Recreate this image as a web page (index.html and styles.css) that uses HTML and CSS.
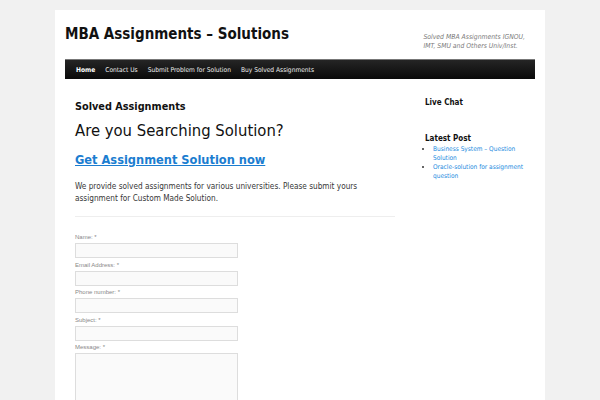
FILE: index.html
```html
<!DOCTYPE html>
<html lang="en">

<head>
	<meta charset="utf-8">
	<title>MBA Assignments – Solutions</title>
	<link rel="stylesheet" href="styles.css">
</head>

<body>
	<div id="page">
		<!-- Header -->
		<header class="site-header">
			<div class="branding">
				<h1 class="site-title">MBA Assignments – Solutions</h1>
				<p class="site-description">Solved MBA Assignments IGNOU,<br>IMT, SMU and Others Univ/Inst.</p>
			</div>
			<nav class="access">
				<a href="#" class="current">Home</a>
				<a href="#">Contact Us</a>
				<a href="#">Submit Problem for Solution</a>
				<a href="#">Buy Solved Assignments</a>
			</nav>
		</header>

		<!-- Main -->
		<div class="main">
			<div class="content">
				<h2 class="entry-title">Solved Assignments</h2>
				<h3 class="big">Are you Searching Solution?</h3>
				<h3 class="cta"><a href="#">Get Assignment Solution now</a></h3>
				<p class="intro">We provide solved assignments for various universities. Please submit yours assignment for Custom Made Solution.</p>
				<hr>

				<form class="contact-form">
					<div class="field">
						<label for="name">Name: *</label>
						<input type="text" id="name">
					</div>
					<div class="field">
						<label for="email">Email Address: *</label>
						<input type="text" id="email">
					</div>
					<div class="field">
						<label for="phone">Phone number: *</label>
						<input type="text" id="phone">
					</div>
					<div class="field">
						<label for="subject">Subject: *</label>
						<input type="text" id="subject">
					</div>
					<div class="field">
						<label for="message">Message: *</label>
						<textarea id="message"></textarea>
					</div>
				</form>
			</div>

			<!-- Sidebar -->
			<aside class="sidebar">
				<h3 class="widget-title">Live Chat</h3>
				<h3 class="widget-title latest">Latest Post</h3>
				<ul>
					<li><a href="#">Business System – Question Solution</a></li>
					<li><a href="#">Oracle-solution for assignment question</a></li>
				</ul>
			</aside>
		</div>
	</div>
</body>

</html>
```

FILE: styles.css
```css
/* Page background and base font */
body {
	margin: 0;
	padding-top: 10px;
	background: #f1f1f1;
	font-family: "DejaVu Sans Condensed", "DejaVu Sans", sans-serif;
	color: #373737;
}

#page {
	width: 490px;
	height: 390px;
	margin: 0 auto;
	background: #fff;
	overflow: hidden;
}

/* Header */
.site-header {
	padding: 0 10px;
}

.branding {
	display: flex;
	justify-content: space-between;
	align-items: flex-start;
	height: 49px;
}

.site-title {
	margin: 15px 0 0;
	font-size: 15px;
	font-weight: bold;
	color: #111;
}

.site-description {
	margin: 23px 10px 0 0;
	font-size: 6.8px;
	line-height: 9px;
	font-style: italic;
	color: #7a7a7a;
}

/* Menu bar */
.access {
	display: flex;
	height: 19px;
	align-items: center;
	padding-left: 11px;
	background: linear-gradient(#252525, #0a0a0a);
	border-top: 1px solid #777;
}

.access a {
	color: #eee;
	font-size: 6.6px;
	text-decoration: none;
	margin-right: 10px;
}

.access a.current {
	font-weight: bold;
	color: #fff;
}

/* Main layout */
.main {
	display: flex;
	padding: 18px 20px 0;
}

.content {
	flex: 0 0 320px;
}

.sidebar {
	flex: 0 0 100px;
	margin-left: 30px;
}

.entry-title {
	margin: 3px 0 0;
	font-size: 10.8px;
	color: #111;
}

.big {
	margin: 8px 0 0;
	font-size: 16.5px;
	font-weight: normal;
	color: #111;
}

.cta {
	margin: 12px 0 0;
	font-size: 12.7px;
}

.cta a {
	color: #1b7dd0;
}

.intro {
	margin: 13px 0 0;
	font-size: 8.2px;
	line-height: 12px;
}

hr {
	margin: 12px 0 0;
	border: none;
	border-top: 1px solid #eee;
}

/* Contact form */
.contact-form {
	margin-top: 17px;
}

.field {
	margin-bottom: 3.5px;
}

.field label {
	display: block;
	font-family: "Liberation Sans", sans-serif;
	font-size: 6px;
	line-height: 7px;
	color: #888;
	margin-bottom: 2px;
}

.field input,
.field textarea {
	display: block;
	box-sizing: border-box;
	width: 163px;
	height: 15px;
	margin: 0;
	border: 1px solid #ddd;
	background: #fafafa;
}

.field textarea {
	height: 60px;
	resize: none;
}

/* Sidebar widgets */
.widget-title {
	margin: 1px 0 0;
	font-size: 8px;
	color: #111;
}

.widget-title.latest {
	margin-top: 27px;
}

.sidebar ul {
	margin: 2px 0 0;
	padding-left: 8px;
	list-style: square;
	color: #666;
}

.sidebar li {
	font-size: 6.5px;
	line-height: 9px;
}

.sidebar a {
	color: #1b8be0;
	text-decoration: none;
}
```
